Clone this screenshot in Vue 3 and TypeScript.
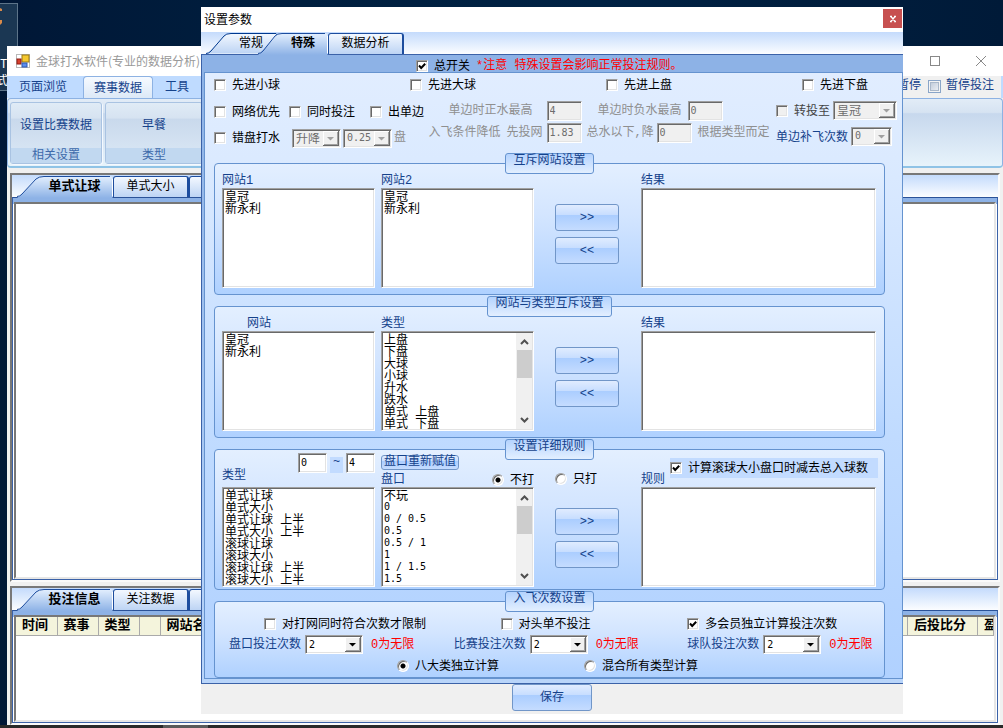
<script setup lang="ts">
import { ref } from 'vue'

interface Header {
  text: string
  width: string
}

const sites: string[] = ['皇冠', '新永利']
const kinds: string[] = ['上盘', '下盘', '大球', '小球', '升水', '跌水', '单式 上盘', '单式 下盘']
const markets: string[] = [
  '单式让球', '单式大小', '单式让球 上半', '单式大小 上半',
  '滚球让球', '滚球大小', '滚球让球 上半', '滚球大小 上半',
]
const lines: string[] = ['不玩', '0', '0 / 0.5', '0.5', '0.5 / 1', '1', '1 / 1.5', '1.5']
const headers: Header[] = [
  { text: '时间', width: '41px' },
  { text: '赛事', width: '41px' },
  { text: '类型', width: '41px' },
  { text: '', width: '21px' },
  { text: '网站名', width: 'auto' },
  { text: '后投比分', width: '70px' },
  { text: '盈', width: '16px' },
]
const firsts: string[] = ['先进小球', '先进大球', '先进上盘', '先进下盘']
const limits: string[] = ['盘口投注次数', '比赛投注次数', '球队投注次数']

const master = ref(true)
const subtract = ref(true)
const independent = ref(true)
const mode = ref('skip')
const scope = ref('eight')

const isNumeric = (s: string): boolean => /^[\d./ ]+$/.test(s)
</script>

<template>
  <div class="desktop">
    <div class="shortcut">
      <svg class="shortcut-art" width="6" height="20" viewBox="0 0 6 20" aria-hidden="true">
        <path d="M0 2l2 1v2H0zM0 14l2 0v3l-2 2z" fill="#d98a4a" />
      </svg>
      <span class="shortcut-a">T</span>
      <span class="shortcut-b">式</span>
    </div>

    <main class="app-window">
      <header class="app-title">
        <svg class="app-icon" width="14" height="14" viewBox="0 0 14 14" aria-hidden="true">
          <rect x="0.5" y="0.5" width="13" height="13" fill="#fff" stroke="#b9b9b9" />
          <rect x="6" y="1" width="7" height="7" fill="#f5c82f" stroke="#9c7a13" />
          <rect x="1" y="5" width="4" height="5" fill="#d8412e" stroke="#8f1d12" />
          <rect x="6" y="9" width="5" height="4" fill="#5b8df0" stroke="#2f58b0" />
        </svg>
        <span class="app-name">金球打水软件(专业的数据分析)</span>
        <button class="win-btn" aria-label="最大化">
          <svg width="12" height="12" viewBox="0 0 12 12"><rect x="1.5" y="1.5" width="9" height="9" fill="none" stroke="#888" /></svg>
        </button>
        <button class="win-btn" aria-label="关闭">
          <svg width="12" height="12" viewBox="0 0 12 12"><path d="M1 1l10 10M11 1L1 11" stroke="#888" fill="none" /></svg>
        </button>
      </header>

      <nav class="ribbon-tabs">
        <button class="ribbon-tab">页面浏览</button>
        <button class="ribbon-tab current">赛事数据</button>
        <button class="ribbon-tab">工具</button>
        <span class="pause">
          <label>暂停</label>
          <label class="pause-item"><input type="checkbox" class="flat-check" />暂停投注</label>
        </span>
      </nav>

      <section class="ribbon">
        <div class="ribbon-group">
          <button class="ribbon-action">设置比赛数据</button>
          <span class="ribbon-caption">相关设置</span>
        </div>
        <div class="ribbon-group">
          <button class="ribbon-action">早餐</button>
          <span class="ribbon-caption">类型</span>
        </div>
      </section>

      <section class="pane pane-top">
        <div class="strip">
          <button class="tab slant active first">
            <svg class="tab-shape" width="96" height="22" viewBox="0 0 96 22" aria-hidden="true">
              <path d="M0 22L4 19L19 3Q22 .5 27 .5H93Q95.500 .5 95.500 3V22z" fill="url(#tab-on)" />
              <path d="M0 20.500Q3 20.500 5 18L19 3Q22 .5 27 .5H93" fill="none" stroke="#1d4d9e" />
              <path d="M95.500 3V20" stroke="#fff" />
            </svg>
            <span>单式让球</span>
          </button>
          <button class="tab box">单式大小</button>
          <button class="tab box" aria-label="更多"></button>
        </div>
        <div class="page"><div class="canvas"></div></div>
      </section>

      <section class="pane pane-bottom">
        <div class="strip">
          <button class="tab slant active first">
            <svg class="tab-shape" width="96" height="22" viewBox="0 0 96 22" aria-hidden="true">
              <path d="M0 22L4 19L19 3Q22 .5 27 .5H93Q95.500 .5 95.500 3V22z" fill="url(#tab-on)" />
              <path d="M0 20.500Q3 20.500 5 18L19 3Q22 .5 27 .5H93" fill="none" stroke="#1d4d9e" />
              <path d="M95.500 3V20" stroke="#fff" />
            </svg>
            <span>投注信息</span>
          </button>
          <button class="tab box">关注数据</button>
          <button class="tab box" aria-label="更多"></button>
        </div>
        <div class="page">
          <div class="canvas">
            <table class="bets">
              <colgroup>
                <col v-for="(h, i) in headers" :key="i" :style="{ width: h.width }" />
              </colgroup>
              <thead>
                <tr><th v-for="(h, i) in headers" :key="i" scope="col">{{ h.text }}</th></tr>
              </thead>
            </table>
          </div>
        </div>
      </section>
    </main>

    <div class="taskbar"><span class="task"></span></div>

    <div class="dialog" role="dialog" aria-label="设置参数">
      <header class="dialog-title">
        <span>设置参数</span>
        <button class="close" aria-label="关闭">
          <svg width="8" height="8" viewBox="0 0 8 8"><path d="M1 1.500h2M5 1.500h2M1 6.500h2M5 6.500h2M2 1.500l4 5M6 1.500l-4 5" stroke="#fff" fill="none" stroke-width="1.300" /></svg>
        </button>
      </header>

      <div class="dialog-strip">
        <button class="tab slant first">
          <svg class="tab-shape" width="74" height="21" viewBox="0 0 74 21" aria-hidden="true">
            <defs>
              <linearGradient id="tab-off" x1="0" y1="0" x2="0" y2="1">
                <stop offset="0" stop-color="#f3f8ff" /><stop offset="1" stop-color="#bdd4f4" />
              </linearGradient>
              <linearGradient id="tab-on" x1="0" y1="0" x2="0" y2="1">
                <stop offset="0" stop-color="#e3effe" /><stop offset="1" stop-color="#8db2e6" />
              </linearGradient>
            </defs>
            <path d="M0 20.500L4 18L18 3Q20 .5 25 .5H70L72 3L56 20.500z" fill="url(#tab-off)" />
            <path d="M0 20.500Q3 20.500 5 18L18 3Q20 .5 25 .5H70L72 3" fill="none" stroke="#00398f" />
          </svg>
          <span>常规</span>
        </button>
        <button class="tab slant active second">
          <svg class="tab-shape" width="70" height="22" viewBox="0 0 70 22" aria-hidden="true">
            <path d="M0 22L4 18L17 3Q19 .5 24 .5H67Q69.500 .5 69.500 3V22z" fill="url(#tab-on)" />
            <path d="M0 20.500Q3 20.500 5 18L17 3Q19 .5 24 .5H67" fill="none" stroke="#1d4d9e" />
            <path d="M69.500 3V20" stroke="#fff" />
          </svg>
          <span>特殊</span>
        </button>
        <button class="tab box">数据分析</button>
      </div>

      <div class="sheet">
        <div class="master">
          <label class="check"><input v-model="master" type="checkbox" />总开关</label>
          <span class="warn">*注意 特殊设置会影响正常投注规则。</span>
        </div>

        <div class="panel">
          <div class="firsts">
            <label v-for="f in firsts" :key="f" class="check"><input type="checkbox" />{{ f }}</label>
          </div>

          <div class="options">
            <div class="opt-left">
              <div class="opt-row">
                <label class="check"><input type="checkbox" />网络优先</label>
                <label class="check"><input type="checkbox" />同时投注</label>
                <label class="check"><input type="checkbox" />出单边</label>
              </div>
              <div class="opt-row">
                <label class="check"><input type="checkbox" />错盘打水</label>
                <span class="combo-set">
                  <select class="combo w48" disabled aria-label="升降"><option>升降</option></select>
                  <select class="combo w48 num" disabled aria-label="盘"><option>0.25</option></select>
                  <span class="dim">盘</span>
                </span>
              </div>
            </div>
            <div class="opt-mid">
              <div class="mid-one">
                <label for="pos">单边时正水最高</label><input id="pos" class="field" value="4" disabled />
                <label for="neg">单边时负水最高</label><input id="neg" class="field" value="0" disabled />
              </div>
              <div class="mid-two">
                <span>入飞条件降低</span>
                <label for="net">先投网</label><input id="net" class="field" value="1.83" disabled />
                <label for="sum">总水以下,降</label><input id="sum" class="field" value="0" disabled />
                <span>根据类型而定</span>
              </div>
            </div>
            <div class="opt-right">
              <div class="opt-row tight">
                <label class="check soft"><input type="checkbox" disabled />转投至</label>
                <select class="combo w64" disabled aria-label="转投至"><option>皇冠</option></select>
              </div>
              <div class="opt-row tight">
                <label class="blue" for="fill">单边补飞次数</label>
                <select id="fill" class="combo w41 num" disabled><option>0</option></select>
              </div>
            </div>
          </div>

          <fieldset class="group">
            <legend>互斥网站设置</legend>
            <div class="columns">
              <div class="col">
                <label for="site1">网站1</label>
                <div class="list"><select id="site1" multiple><option v-for="s in sites" :key="s">{{ s }}</option></select></div>
              </div>
              <div class="col">
                <label for="site2">网站2</label>
                <div class="list"><select id="site2" multiple><option v-for="s in sites" :key="s">{{ s }}</option></select></div>
              </div>
              <div class="col movers">
                <button class="push">&gt;&gt;</button>
                <button class="push">&lt;&lt;</button>
              </div>
              <div class="col">
                <label for="res1">结果</label>
                <div class="list"><select id="res1" multiple></select></div>
              </div>
            </div>
          </fieldset>

          <fieldset class="group">
            <legend>网站与类型互斥设置</legend>
            <div class="columns">
              <div class="col">
                <label for="site3" class="inset-label">网站</label>
                <div class="list"><select id="site3" multiple><option v-for="s in sites" :key="s">{{ s }}</option></select></div>
              </div>
              <div class="col">
                <label for="kind">类型</label>
                <div class="list">
                  <select id="kind" multiple><option v-for="k in kinds" :key="k">{{ k }}</option></select>
                  <div class="bar">
                    <svg width="9" height="6" viewBox="0 0 9 6"><path d="M1 5l3.500-3.500L8 5" fill="none" stroke="#505050" stroke-width="2" /></svg>
                    <span class="thumb"></span>
                    <svg width="9" height="6" viewBox="0 0 9 6"><path d="M1 1l3.500 3.500L8 1" fill="none" stroke="#505050" stroke-width="2" /></svg>
                  </div>
                </div>
              </div>
              <div class="col movers">
                <button class="push">&gt;&gt;</button>
                <button class="push">&lt;&lt;</button>
              </div>
              <div class="col">
                <label for="res2">结果</label>
                <div class="list"><select id="res2" multiple></select></div>
              </div>
            </div>
          </fieldset>

          <fieldset class="group">
            <legend>设置详细规则</legend>
            <div class="columns rules">
              <div class="col">
                <div class="head">
                  <label for="market" class="low">类型</label>
                  <span class="range">
                    <input class="field small" value="0" aria-label="最小" />
                    <span class="tilde">~</span>
                    <input class="field small" value="4" aria-label="最大" />
                  </span>
                </div>
                <div class="list"><select id="market" multiple><option v-for="m in markets" :key="m">{{ m }}</option></select></div>
              </div>
              <div class="col">
                <div class="head stacked">
                  <button class="push mini">盘口重新赋值</button>
                  <div class="line-row">
                    <label for="line">盘口</label>
                    <label class="check"><input v-model="mode" type="radio" name="mode" value="skip" />不打</label>
                  </div>
                </div>
                <div class="list">
                  <select id="line" multiple><option v-for="l in lines" :key="l" :class="{ num: isNumeric(l) }">{{ l }}</option></select>
                  <div class="bar">
                    <svg width="9" height="6" viewBox="0 0 9 6"><path d="M1 5l3.500-3.500L8 5" fill="none" stroke="#505050" stroke-width="2" /></svg>
                    <span class="thumb"></span>
                    <svg width="9" height="6" viewBox="0 0 9 6"><path d="M1 1l3.500 3.500L8 1" fill="none" stroke="#505050" stroke-width="2" /></svg>
                  </div>
                </div>
              </div>
              <div class="col movers">
                <label class="check only"><input v-model="mode" type="radio" name="mode" value="only" />只打</label>
                <button class="push">&gt;&gt;</button>
                <button class="push">&lt;&lt;</button>
              </div>
              <div class="col">
                <div class="head">
                  <label for="rule" class="lowest">规则</label>
                  <label class="check subtract"><input v-model="subtract" type="checkbox" />计算滚球大小盘口时减去总入球数</label>
                </div>
                <div class="list"><select id="rule" multiple></select></div>
              </div>
            </div>
          </fieldset>

          <fieldset class="group">
            <legend>入飞次数设置</legend>
            <div class="counts">
              <div class="flags">
                <label class="check"><input type="checkbox" />对打网同时符合次数才限制</label>
                <label class="check"><input type="checkbox" />对头单不投注</label>
                <label class="check"><input v-model="independent" type="checkbox" />多会员独立计算投注次数</label>
              </div>
              <div class="limits">
                <div v-for="(l, i) in limits" :key="l" class="limit">
                  <label class="blue" :for="'limit' + i">{{ l }}</label>
                  <select :id="'limit' + i" class="combo w58 num"><option>2</option></select>
                  <span class="red">0为无限</span>
                </div>
              </div>
              <div class="scopes">
                <label class="check"><input v-model="scope" type="radio" name="scope" value="eight" />八大类独立计算</label>
                <label class="check"><input v-model="scope" type="radio" name="scope" value="all" />混合所有类型计算</label>
              </div>
            </div>
          </fieldset>
        </div>
      </div>

      <footer class="foot"><button class="push save">保存</button></footer>
    </div>
  </div>
</template>

<style>
body {
  margin: 0;
  background: #fff;
}
</style>

<style scoped>
.desktop {
  position: relative;
  display: flex;
  flex-direction: column;
  box-sizing: border-box;
  height: 100vh;
  min-height: 728px;
  padding: 46px 0 0 7px;
  overflow: hidden;
  background: linear-gradient(90deg, #001736, #001f3f 30%, #002244 60%, #001a38);
  color: #000;
  font: 12px/14px "Liberation Mono", "Noto Sans CJK SC", monospace;
}
.desktop *,
.desktop *::before {
  box-sizing: border-box;
}
button,
input,
select {
  margin: 0;
  font: inherit;
  color: inherit;
}
button {
  padding: 0;
  border: 0;
  background: none;
  white-space: nowrap;
}
label,
span {
  white-space: nowrap;
}

/* desktop icon */
.shortcut {
  position: absolute;
  left: -60px;
  top: 3px;
  width: 78px;
  height: 88px;
  border: 1px solid #5d7489;
  background: #1b3753;
  color: #fff;
}
.shortcut-art { position: absolute; left: 59px; top: 2px; }
.shortcut-a { position: absolute; left: 59px; top: 54px; }
.shortcut-b { position: absolute; left: 55px; top: 71px; }

/* main window */
.app-window {
  position: relative;
  display: flex;
  flex: 1;
  flex-direction: column;
  min-height: 0;
  background: #f0f0f0;
}
.app-title {
  display: flex;
  align-items: center;
  height: 30px;
  padding: 0 14px 0 9px;
  background: #fff;
  color: #999;
  font-family: "Noto Sans CJK SC", sans-serif;
}
.app-name { flex: 1; margin-left: 6px; }
.win-btn { display: grid; place-items: center; width: 16px; height: 16px; margin-left: 30px; }
.ribbon-tabs {
  display: flex;
  height: 22px;
  padding-left: 1px;
  background: #bfdbff;
  color: #15428b;
}
.ribbon-tab { width: 70px; height: 22px; padding-top: 2px; }
.ribbon-tab + .ribbon-tab { margin-left: 5px; }
.ribbon-tab.current {
  height: 23px;
  border: 1px solid #8db2e3;
  border-bottom: 0;
  border-radius: 4px 4px 0 0;
  background: linear-gradient(#f6faff, #dbe8f7);
}
.ribbon-tab:nth-child(3) { width: 38px; }
.pause {
  display: flex;
  justify-content: flex-end;
  align-items: center;
  flex: 1;
  gap: 7px;
  margin: 0 2px 0 500px;
  padding: 0 7px 2px 0;
  background: #f0f0f0;
}
.pause-item { display: flex; align-items: center; gap: 5px; }
.flat-check {
  appearance: none;
  width: 13px;
  height: 13px;
  border: 1px solid #8aa5c8;
  background: linear-gradient(135deg, #b8c4d4, #f4f6fa);
  box-shadow: inset 0 0 0 1px #f4f4f4, inset 0 0 0 2px #aab8ca;
}
.ribbon {
  display: flex;
  gap: 3px;
  height: 70px;
  padding: 3px 2px;
  border: 1px solid #8db2e3;
  border-bottom: 2px solid #8fc3e6;
  border-radius: 4px;
  background: linear-gradient(#e2ecf7, #d6e3f2 20%, #c7d8ed 22%, #e7f3fb);
}
.ribbon-group {
  display: flex;
  flex-direction: column;
  width: 92px;
  height: 62px;
  border: 1px solid #a9c3e2;
  border-radius: 3px;
  background: linear-gradient(#e0ebf6, #d6e3f1 25%, #c9d9ec 27%, #dce9f6);
  box-shadow: 1px 1px #f4f9ff;
  color: #15428b;
}
.ribbon-group:nth-child(2) { width: 98px; }
.ribbon-action { flex: 1; }
.ribbon-caption { height: 15px; background: #c1d8f0; color: #3e6aaa; line-height: 17px; text-align: center; }

.pane {
  display: flex;
  flex-direction: column;
  margin: 5px 3px 0 3px;
  border: 2px solid;
  border-color: #787878 #fafafa #fafafa #787878;
}
.pane-top { flex: 1; min-height: 0; }
.pane-bottom { height: 139px; margin-top: 4px; }
.strip,
.dialog-strip {
  display: flex;
  align-items: flex-end;
  height: 22px;
  background: linear-gradient(#c4dbfc, #fbfdff);
}
.strip { padding-left: 5px; }
.page {
  display: flex;
  flex: 1;
  min-height: 0;
  padding: 4px 1px 0 1px;
  border: 1px solid #3b62a8;
  border-top-color: #2a5298;
  background: linear-gradient(#8db2e6 6px, #fff 6px);
}
.canvas {
  flex: 1;
  overflow: hidden;
  border: 2px solid;
  border-color: #777 #e6e6e6 #e6e6e6 #777;
  background: #fff;
}
.bets { width: 100%; border-collapse: collapse; table-layout: fixed; background: #f4f4dc; }
.bets th {
  height: 18px;
  padding: 0 0 0 6px;
  overflow: hidden;
  border-right: 1px solid #aaa;
  border-bottom: 1px solid #aaa;
  font-size: 13px;
  line-height: 18px;
  text-align: left;
  white-space: nowrap;
}

.tab {
  position: relative;
  height: 21px;
  line-height: 20px;
}
.tab span { position: relative; }
.tab-shape { position: absolute; left: 0; top: 0; }
.tab.active { z-index: 1; margin-bottom: -1px; height: 22px; font-weight: bold; }
.tab.box {
  min-width: 76px;
  border: 1px solid #1d4d9e;
  border-width: 1px 2px 0 1px;
  border-radius: 3px 3px 0 0;
  background: linear-gradient(#f3f8ff, #bdd4f4);
}
.strip .slant.active { width: 96px; padding-left: 19px; font-size: 13px; }

/* taskbar */
.taskbar { height: 3px; margin-left: -7px; padding-left: 163px; background: #292929; }
.task { display: block; width: 45px; height: 3px; background: #5a5a5a; }

/* dialog */
.dialog {
  position: absolute;
  z-index: 2;
  left: 201px;
  right: 100px;
  top: 7px;
  background: #f0f0f0;
}
.dialog-title {
  display: flex;
  align-items: flex-start;
  justify-content: space-between;
  height: 25px;
  padding: 2px 1px 0 3px;
  background: #fff;
  font-family: "Noto Sans CJK SC", sans-serif;
  line-height: 20px;
}
.close { display: grid; place-items: center; width: 19px; height: 19px; background: #c75050; }
.dialog-strip { padding-left: 5px; }
.dialog-strip .tab { line-height: 22px; }
.dialog-strip .tab.box { line-height: 21px; }
.dialog-strip .first { width: 72px; padding-left: 18px; }
.dialog-strip .second { width: 70px; margin-left: -20px; padding-left: 20px; }
.sheet {
  padding: 0 0 4px 2px;
  border: 1px solid #3b62a8;
  border-width: 1px 0 1px 1px;
  background: linear-gradient(#8db2e6 20px, #b9d5fa);
}
.master { display: flex; align-items: center; gap: 6px; height: 17px; padding: 4px 0 0 212px; }
.warn,
.red { color: #f00; }
.panel {
  padding: 0 17px 0 9px;
  border: 1px solid #6593cf;
  background: linear-gradient(#e1edff, #dbeaff 14%, #c0dbff 60%, #b0d1ff);
}
.check { display: flex; align-items: center; gap: 6px; padding-top: 2px; color: #000; }
.check input {
  appearance: none;
  flex: none;
  width: 12px;
  height: 12px;
  margin-bottom: 2px;
  border: 1px solid;
  border-color: #a0a0a0 #fff #fff #a0a0a0;
  background: #fff center / 8px 8px no-repeat;
  box-shadow: inset 1px 1px #696969, inset -1px -1px #e3e3e3;
}
.check input:checked {
  background-image: url("data:image/svg+xml,%3Csvg xmlns='http://www.w3.org/2000/svg' viewBox='0 0 8 8'%3E%3Cpath d='M1 3.500L3.200 6L7.200 1.700' fill='none' stroke='%23000' stroke-width='2'/%3E%3C/svg%3E");
}
.check input[type="radio"] { border-radius: 50%; }
.check input[type="radio"]:checked { background-image: radial-gradient(circle, #000 2px, transparent 3px); }
.check input:disabled { background-color: #f0f0f0; }
.blue { color: #15428b; }
.dim { color: #8f8f8f; }

.firsts {
  display: grid;
  grid-template-columns: 196fr 196fr 196fr 83fr;
  height: 24px;
}
.options { display: flex; justify-content: space-between; height: 56px; margin-right: -12px; }
.opt-left { flex: none; width: 214px; padding-top: 2px; }
.opt-row { display: grid; grid-template-columns: 75px 81px auto; align-items: center; height: 26px; }
.opt-row.tight { display: flex; gap: 3px; }
.combo-set { display: flex; grid-column: 2 / -1; align-items: center; gap: 2px; margin-left: 3px; }
.opt-mid { flex: none; padding-top: 4px; color: #8f8f8f; }
.mid-one { display: grid; grid-template-columns: 98px 51px 90px 35px; align-items: center; padding-left: 20px; }
.mid-two { display: grid; grid-template-columns: 78px 40px 40px 70px 41px 78px; align-items: center; margin-top: 2px; }
.opt-right { flex: none; width: 121px; }
.opt-right label { padding-top: 4px; }
.soft { color: #444; }
.field {
  width: 35px;
  height: 20px;
  padding: 0 0 2px 2px;
  border: 1px solid;
  border-color: #a0a0a0 #fff #fff #a0a0a0;
  border-radius: 0;
  background: #fff;
  box-shadow: inset 1px 1px #696969, inset -1px -1px #e3e3e3;
  color: #000;
  font-family: "DejaVu Sans Mono", monospace;
  font-size: 10px;
}
.field:disabled { background: #f0f0f0; color: #6d6d6d; }
.field.small { width: 29px; }
.combo {
  appearance: none;
  flex: none;
  height: 19px;
  padding: 3px 16px 0 3px;
  border: 1px solid;
  border-color: #a0a0a0 #fff #fff #a0a0a0;
  border-radius: 0;
  background: #fff url("data:image/svg+xml,%3Csvg xmlns='http://www.w3.org/2000/svg' width='16' height='15'%3E%3Cpath d='M0 0h16v15H0z' fill='%23696969'/%3E%3Cpath d='M0 0h15v14H0z' fill='%23fff'/%3E%3Cpath d='M1 1h14v13H1z' fill='%23a0a0a0'/%3E%3Cpath d='M1 1h13v12H1z' fill='%23f0f0f0'/%3E%3Cpath d='M4 6h7L7.500 9.500z'/%3E%3C/svg%3E") right 1px top 1px no-repeat;
  box-shadow: inset 1px 1px #696969, inset -1px -1px #e3e3e3;
  line-height: 14px;
}
.combo.num { padding-top: 0; }
.combo:disabled {
  opacity: 1;
  background-color: #f0f0f0;
  background-image: url("data:image/svg+xml,%3Csvg xmlns='http://www.w3.org/2000/svg' width='16' height='15'%3E%3Cpath d='M0 0h16v15H0z' fill='%23696969'/%3E%3Cpath d='M0 0h15v14H0z' fill='%23fff'/%3E%3Cpath d='M1 1h14v13H1z' fill='%23a0a0a0'/%3E%3Cpath d='M1 1h13v12H1z' fill='%23f0f0f0'/%3E%3Cpath d='M4 6h7L7.500 9.500z' fill='%23a0a0a0'/%3E%3C/svg%3E");
  color: #6d6d6d;
}
.combo.w41 { width: 41px; }
.combo.w48 { width: 49px; }
.combo.w58 { width: 58px; }
.combo.w64 { width: 64px; }
.num { font-family: "DejaVu Sans Mono", monospace; font-size: 10px; }

.group {
  min-width: 0;
  margin: 0 0 1px;
  padding: 0;
  border: 1px solid #6593cf;
  border-radius: 4px;
  background: linear-gradient(#e3efff, #d3e5ff 40%, #afd1ff);
}
.group:last-child { margin-bottom: 0; }
.group legend {
  height: 21px;
  margin: 0 auto;
  padding: 0 7px;
  border: 1px solid #6593cf;
  border-radius: 3px;
  background: linear-gradient(#b4d3fe, #e3efff);
  color: #15428b;
  line-height: 14px;
}
.columns {
  display: grid;
  grid-template-columns: 153fr 153fr 64fr 235fr;
  padding: 0 57px 6px 7px;
  color: #15428b;
}
.col { display: flex; flex-direction: column; justify-content: flex-end; min-width: 0; }
.col:nth-child(2) { margin-left: 6px; margin-right: -6px; }
.col:nth-child(3) { margin-left: 27px; margin-right: -27px; }
.col:nth-child(4) { margin-left: 49px; margin-right: -49px; }
.inset-label { margin-left: 25px; }
.list {
  display: flex;
  height: 100px;
  border: 1px solid;
  border-color: #a0a0a0 #fff #fff #a0a0a0;
  padding: 1px;
  background: #fff;
  box-shadow: inset 1px 1px #696969, inset -1px -1px #e3e3e3;
}
.list select {
  flex: 1;
  min-width: 0;
  height: 99px;
  margin-top: -3px;
  padding: 0;
  overflow: hidden;
  border: 0;
  border-radius: 0;
  outline: 0;
  background: transparent;
  color: #000;
  scrollbar-width: none;
}
.list option {
  height: 12px;
  min-height: 12px;
  padding: 0 1px;
}
.list option.num { padding-top: 3px; }
.bar {
  display: flex;
  flex-direction: column;
  align-items: center;
  width: 16px;
  padding: 6px 0;
  background: #f0f0f0;
}
.thumb { flex: none; width: 15px; height: 28px; margin: 5px 0 auto; background: #cdcdcd; }
.movers { gap: 6px; padding-bottom: 24px; }
.push {
  flex: none;
  height: 27px;
  border: 1px solid #7196c8;
  border-radius: 3px;
  background: linear-gradient(#e0ecff, #c8deff 38%, #aacdff 40%, #c5dcff);
  color: #15428b;
  line-height: 22px;
}
.rules { margin-top: -7px; padding-bottom: 2px; }
.rules .movers { padding-bottom: 19px; }
.only { margin-bottom: 15px; }
.head { display: flex; justify-content: space-between; height: 34px; }
.low { align-self: flex-end; margin-bottom: 4px; }
.lowest { align-self: flex-end; }
.range { display: flex; gap: 3px; }
.tilde { width: 13px; height: 16px; margin-top: 4px; background: #c2dbff; line-height: 10px; text-align: center; }
.head.stacked { flex-direction: column; justify-content: space-between; padding-top: 2px; }
.push.mini { align-self: flex-start; height: 15px; padding: 0 2px; line-height: 13px; }
.line-row { display: flex; justify-content: space-between; height: 15px; align-items: center; }
.subtract { height: 20px; margin: 5px -2px 0 0; padding-right: 10px; background: #c2dbff; }

.counts { height: 65px; }
.flags {
  display: grid;
  grid-template-columns: 237fr 187fr 197fr;
  height: 23px;
  padding-left: 49px;
}
.limits {
  display: grid;
  grid-template-columns: 225fr 234fr 197fr;
  height: 18px;
  padding-left: 14px;
}
.limit { display: flex; align-items: center; gap: 4px; }
.limit .red { margin-left: 4px; }
.scopes { display: flex; align-items: center; justify-content: center; gap: 85px; height: 26px; padding-right: 4px; }

.foot { display: flex; justify-content: center; align-items: flex-start; height: 30px; }
.save { width: 80px; }
</style>
